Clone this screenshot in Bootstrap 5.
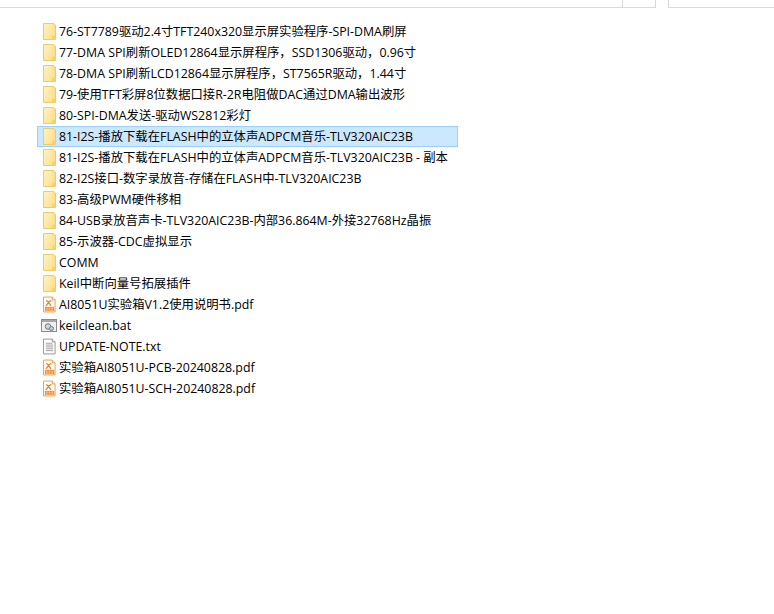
<!DOCTYPE html>
<html lang="zh">
<head>
<meta charset="utf-8">
<title>Files</title>
<link href="https://cdn.jsdelivr.net/npm/bootstrap@5.3.0/dist/css/bootstrap.min.css" rel="stylesheet">
<style>
html,body{margin:0;background:#fff;height:614px;overflow:hidden}
.top-strip{height:8px}
.strip-a{width:622px;border-bottom:1px solid #d9d9d9}
.strip-b{width:34px;border:1px solid #d9d9d9;border-top:0}
.strip-c{width:12px}
.strip-d{flex:1;border:1px solid #d9d9d9;border-top:0;border-right:0}
.file-list{padding:13px 0 0 37px;width:458px;margin:0;list-style:none}
.file-row{height:21px;padding-left:5px;gap:3px;border:1px solid transparent;
 font:12.35px/19px "Open Sans","Noto Sans CJK SC",sans-serif;color:#000;white-space:nowrap}
.file-row.picked{background:#cce8ff;border-color:#99d1ff}
.file-row svg{flex:none;display:block}
.file-row svg.wide-icon{margin:0 -1px 0 -2px;width:16px}
</style>
</head>
<body>
<div class="d-flex top-strip"><div class="strip-a"></div><div class="strip-b"></div><div class="strip-c"></div><div class="strip-d"></div></div>
<svg width="0" height="0" class="position-absolute">
<defs>
<linearGradient id="fg" x1="0" y1="0" x2="1" y2="1"><stop offset="0" stop-color="#fff3c0"/><stop offset="1" stop-color="#fde08e"/></linearGradient>
<symbol id="fold" viewBox="0 0 13 17"><path d="M.5.5H10.5L12.5 2V16.5H.5Z" fill="#ffe08f" stroke="#eccb6a"/><path d="M1 1H9.5V13L8.5 16H1Z" fill="url(#fg)"/><path d="M9.5 12.5H12.5V16.5H9Z" fill="#f7d26a"/></symbol>
<symbol id="pdf" viewBox="0 0 14 17"><path d="M.5.5H10L13 3.5V16.5H.5Z" fill="#fff" stroke="#f0953a"/><path d="M10 .5V3.5H13" fill="#fdeedd" stroke="#f0953a"/><path d="M3.5 4C6 5 7 8 8.5 10M9 4C6 5 5 8 3 10" fill="none" stroke="#ec7f22" stroke-width="1.4"/><rect x="2" y="11" width="10" height="4.5" fill="#f08a2c"/><path d="M3 12.5H11M3 14.5H11" stroke="#fff" stroke-width=".7" stroke-dasharray="2 1"/></symbol>
<symbol id="bat" viewBox="0 0 16 13"><rect x=".5" y=".5" width="15" height="12" fill="#f0f0f0" stroke="#8a8a8a"/><rect x="1" y="1" width="14" height="2" fill="#a8a8a8"/><circle cx="7" cy="7.5" r="2.8" fill="#cfd6dc" stroke="#6f7c88"/><circle cx="10.5" cy="9.5" r="2" fill="#bcd0e2" stroke="#6f7c88"/></symbol>
<symbol id="txt" viewBox="0 0 14 17"><path d="M.5.5H10L13 3.5V16.5H.5Z" fill="#fff" stroke="#8f8f8f"/><path d="M10 .5V3.5H13" fill="#eee" stroke="#8f8f8f"/><path d="M3 5H10M3 7H11M3 9H11M3 11H11M3 13H11" stroke="#9a9a9a"/></symbol>
</defs>
</svg>
<ul class="file-list">
<li class="file-row d-flex align-items-center"><svg width="13" height="17"><use href="#fold"/></svg><span>76-ST7789驱动2.4寸TFT240x320显示屏实验程序-SPI-DMA刷屏</span></li>
<li class="file-row d-flex align-items-center"><svg width="13" height="17"><use href="#fold"/></svg><span>77-DMA SPI刷新OLED12864显示屏程序，SSD1306驱动，0.96寸</span></li>
<li class="file-row d-flex align-items-center"><svg width="13" height="17"><use href="#fold"/></svg><span>78-DMA SPI刷新LCD12864显示屏程序，ST7565R驱动，1.44寸</span></li>
<li class="file-row d-flex align-items-center"><svg width="13" height="17"><use href="#fold"/></svg><span>79-使用TFT彩屏8位数据口接R-2R电阻做DAC通过DMA输出波形</span></li>
<li class="file-row d-flex align-items-center"><svg width="13" height="17"><use href="#fold"/></svg><span>80-SPI-DMA发送-驱动WS2812彩灯</span></li>
<li class="file-row picked d-flex align-items-center"><svg width="13" height="17"><use href="#fold"/></svg><span>81-I2S-播放下载在FLASH中的立体声ADPCM音乐-TLV320AIC23B</span></li>
<li class="file-row d-flex align-items-center"><svg width="13" height="17"><use href="#fold"/></svg><span>81-I2S-播放下载在FLASH中的立体声ADPCM音乐-TLV320AIC23B - 副本</span></li>
<li class="file-row d-flex align-items-center"><svg width="13" height="17"><use href="#fold"/></svg><span>82-I2S接口-数字录放音-存储在FLASH中-TLV320AIC23B</span></li>
<li class="file-row d-flex align-items-center"><svg width="13" height="17"><use href="#fold"/></svg><span>83-高级PWM硬件移相</span></li>
<li class="file-row d-flex align-items-center"><svg width="13" height="17"><use href="#fold"/></svg><span>84-USB录放音声卡-TLV320AIC23B-内部36.864M-外接32768Hz晶振</span></li>
<li class="file-row d-flex align-items-center"><svg width="13" height="17"><use href="#fold"/></svg><span>85-示波器-CDC虚拟显示</span></li>
<li class="file-row d-flex align-items-center"><svg width="13" height="17"><use href="#fold"/></svg><span>COMM</span></li>
<li class="file-row d-flex align-items-center"><svg width="13" height="17"><use href="#fold"/></svg><span>Keil中断向量号拓展插件</span></li>
<li class="file-row d-flex align-items-center"><svg width="13" height="17"><use href="#pdf"/></svg><span>AI8051U实验箱V1.2使用说明书.pdf</span></li>
<li class="file-row d-flex align-items-center"><svg class="wide-icon" width="16" height="13"><use href="#bat"/></svg><span>keilclean.bat</span></li>
<li class="file-row d-flex align-items-center"><svg width="13" height="17"><use href="#txt"/></svg><span>UPDATE-NOTE.txt</span></li>
<li class="file-row d-flex align-items-center"><svg width="13" height="17"><use href="#pdf"/></svg><span>实验箱AI8051U-PCB-20240828.pdf</span></li>
<li class="file-row d-flex align-items-center"><svg width="13" height="17"><use href="#pdf"/></svg><span>实验箱AI8051U-SCH-20240828.pdf</span></li>
</ul>
</body>
</html>
